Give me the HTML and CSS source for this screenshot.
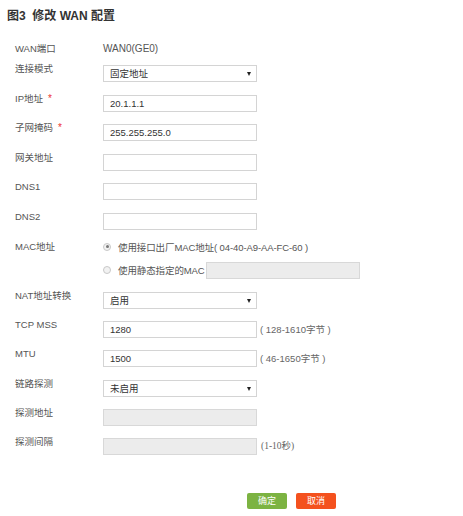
FILE: index.html
```html
<!DOCTYPE html>
<html lang="zh-CN">
<head>
<meta charset="utf-8">
<title>修改 WAN 配置</title>
<link rel="stylesheet" href="styles.css">
</head>
<body>
<h1 class="title">图3&nbsp; 修改 WAN 配置</h1>
<div class="form">
  <div class="row row-static"><span class="lbl">WAN端口</span><span class="val">WAN0(GE0)</span></div>
  <div class="row top"><span class="lbl">连接模式</span><div class="select">固定地址<i class="arrow"></i></div></div>
  <div class="row top"><span class="lbl">IP地址<em class="req">*</em></span><div class="input">20.1.1.1</div></div>
  <div class="row top"><span class="lbl">子网掩码<em class="req">*</em></span><div class="input">255.255.255.0</div></div>
  <div class="row top"><span class="lbl">网关地址</span><div class="input"></div></div>
  <div class="row top"><span class="lbl">DNS1</span><div class="input"></div></div>
  <div class="row top"><span class="lbl">DNS2</span><div class="input"></div></div>
  <div class="row mac">
    <span class="lbl">MAC地址</span>
    <div class="opts">
      <div class="opt opt1"><span class="radio checked"></span><span>使用接口出厂MAC地址( 04-40-A9-AA-FC-60 )</span></div>
      <div class="opt opt2"><span class="radio"></span><span>使用静态指定的MAC</span><div class="input disabled wide"></div></div>
    </div>
  </div>
  <div class="row bot"><span class="lbl">NAT地址转换</span><div class="select">启用<i class="arrow"></i></div></div>
  <div class="row bot"><span class="lbl">TCP MSS</span><div class="input">1280</div><span class="hint">( 128-1610字节 )</span></div>
  <div class="row bot"><span class="lbl">MTU</span><div class="input">1500</div><span class="hint">( 46-1650字节 )</span></div>
  <div class="row bot"><span class="lbl">链路探测</span><div class="select">未启用<i class="arrow"></i></div></div>
  <div class="row bot"><span class="lbl">探测地址</span><div class="input disabled"></div></div>
  <div class="row bot"><span class="lbl">探测间隔</span><div class="input disabled"></div><span class="hint serif">(1-10秒)</span></div>
</div>
<div class="actions">
  <button class="btn ok">确定</button>
  <button class="btn cancel">取消</button>
</div>
</body>
</html>
```
FILE: styles.css
```css
html, body {
  margin: 0;
  padding: 0;
  background: #fff;
}
body {
  font-family: "Liberation Sans", "Noto Sans CJK SC", sans-serif;
  font-size: 9.5px;
  color: #555;
}
.title {
  margin: 0;
  padding: 10px 0 0 7px;
  font-size: 12px;
  line-height: 13px;
  font-weight: 600;
  color: #333;
}
.form {
  padding: 20px 0 0 15px;
}
.row {
  display: flex;
  align-items: flex-start;
}
.row.top { height: 29.6px; }
.row.bot { height: 29.2px; }
.row-static {
  height: 22px;
  line-height: 12px;
}
.lbl {
  width: 88px;
  flex: none;
  line-height: 12px;
  margin-top: -2px;
  color: #555;
}
.row-static .lbl { margin-top: 0; }
.val {
  color: #555;
  font-size: 10px;
}
.req {
  font-style: normal;
  color: #e33;
  margin-left: 5px;
  font-size: 10px;
}
.input, .select {
  position: relative;
  box-sizing: border-box;
  width: 154px;
  height: 17px;
  border: 1px solid #d4d4d4;
  background: #fff;
  padding-left: 6px;
  line-height: 15px;
  color: #333;
  font-size: 9.5px;
  flex: none;
}
.input.disabled {
  background: #ececec;
  border-color: #d8d8d8;
}
.arrow {
  position: absolute;
  right: 5px;
  top: 6px;
  width: 0;
  height: 0;
  border-left: 2px solid transparent;
  border-right: 2px solid transparent;
  border-top: 4px solid #222;
}
.hint {
  margin-left: 3px;
  line-height: 17px;
  color: #666;
  font-size: 9.5px;
}
.hint.serif {
  font-family: "Liberation Serif", "Noto Sans CJK SC", serif;
  margin-left: 4px;
}
.row.mac {
  height: 49.4px;
}
.opts {
  display: flex;
  flex-direction: column;
}
.opt {
  display: flex;
  align-items: center;
  color: #555;
  letter-spacing: -0.1px;
}
.opt1 {
  height: 12px;
  margin-top: -2px;
  margin-bottom: 9.4px;
}
.opt2 {
  height: 17px;
}
.radio {
  box-sizing: border-box;
  width: 8px;
  height: 8px;
  border-radius: 50%;
  border: 1px solid #c8c8c8;
  background: #f2f2f2;
  margin-right: 7px;
  display: flex;
  align-items: center;
  justify-content: center;
}
.radio.checked::after {
  content: "";
  width: 3px;
  height: 3px;
  border-radius: 50%;
  background: #777;
}
.input.wide {
  margin-left: 1px;
  width: 154px;
}
.actions {
  display: flex;
  gap: 9px;
  padding: 25.8px 0 0 247px;
}
.btn {
  box-sizing: border-box;
  width: 40px;
  height: 16px;
  border: none;
  border-radius: 2px;
  padding: 0;
  color: #fff;
  font-family: "Noto Sans CJK SC", sans-serif;
  font-size: 9px;
  line-height: 16px;
}
.btn.ok { background: #7cb342; }
.btn.cancel { background: #f4511e; }
```
